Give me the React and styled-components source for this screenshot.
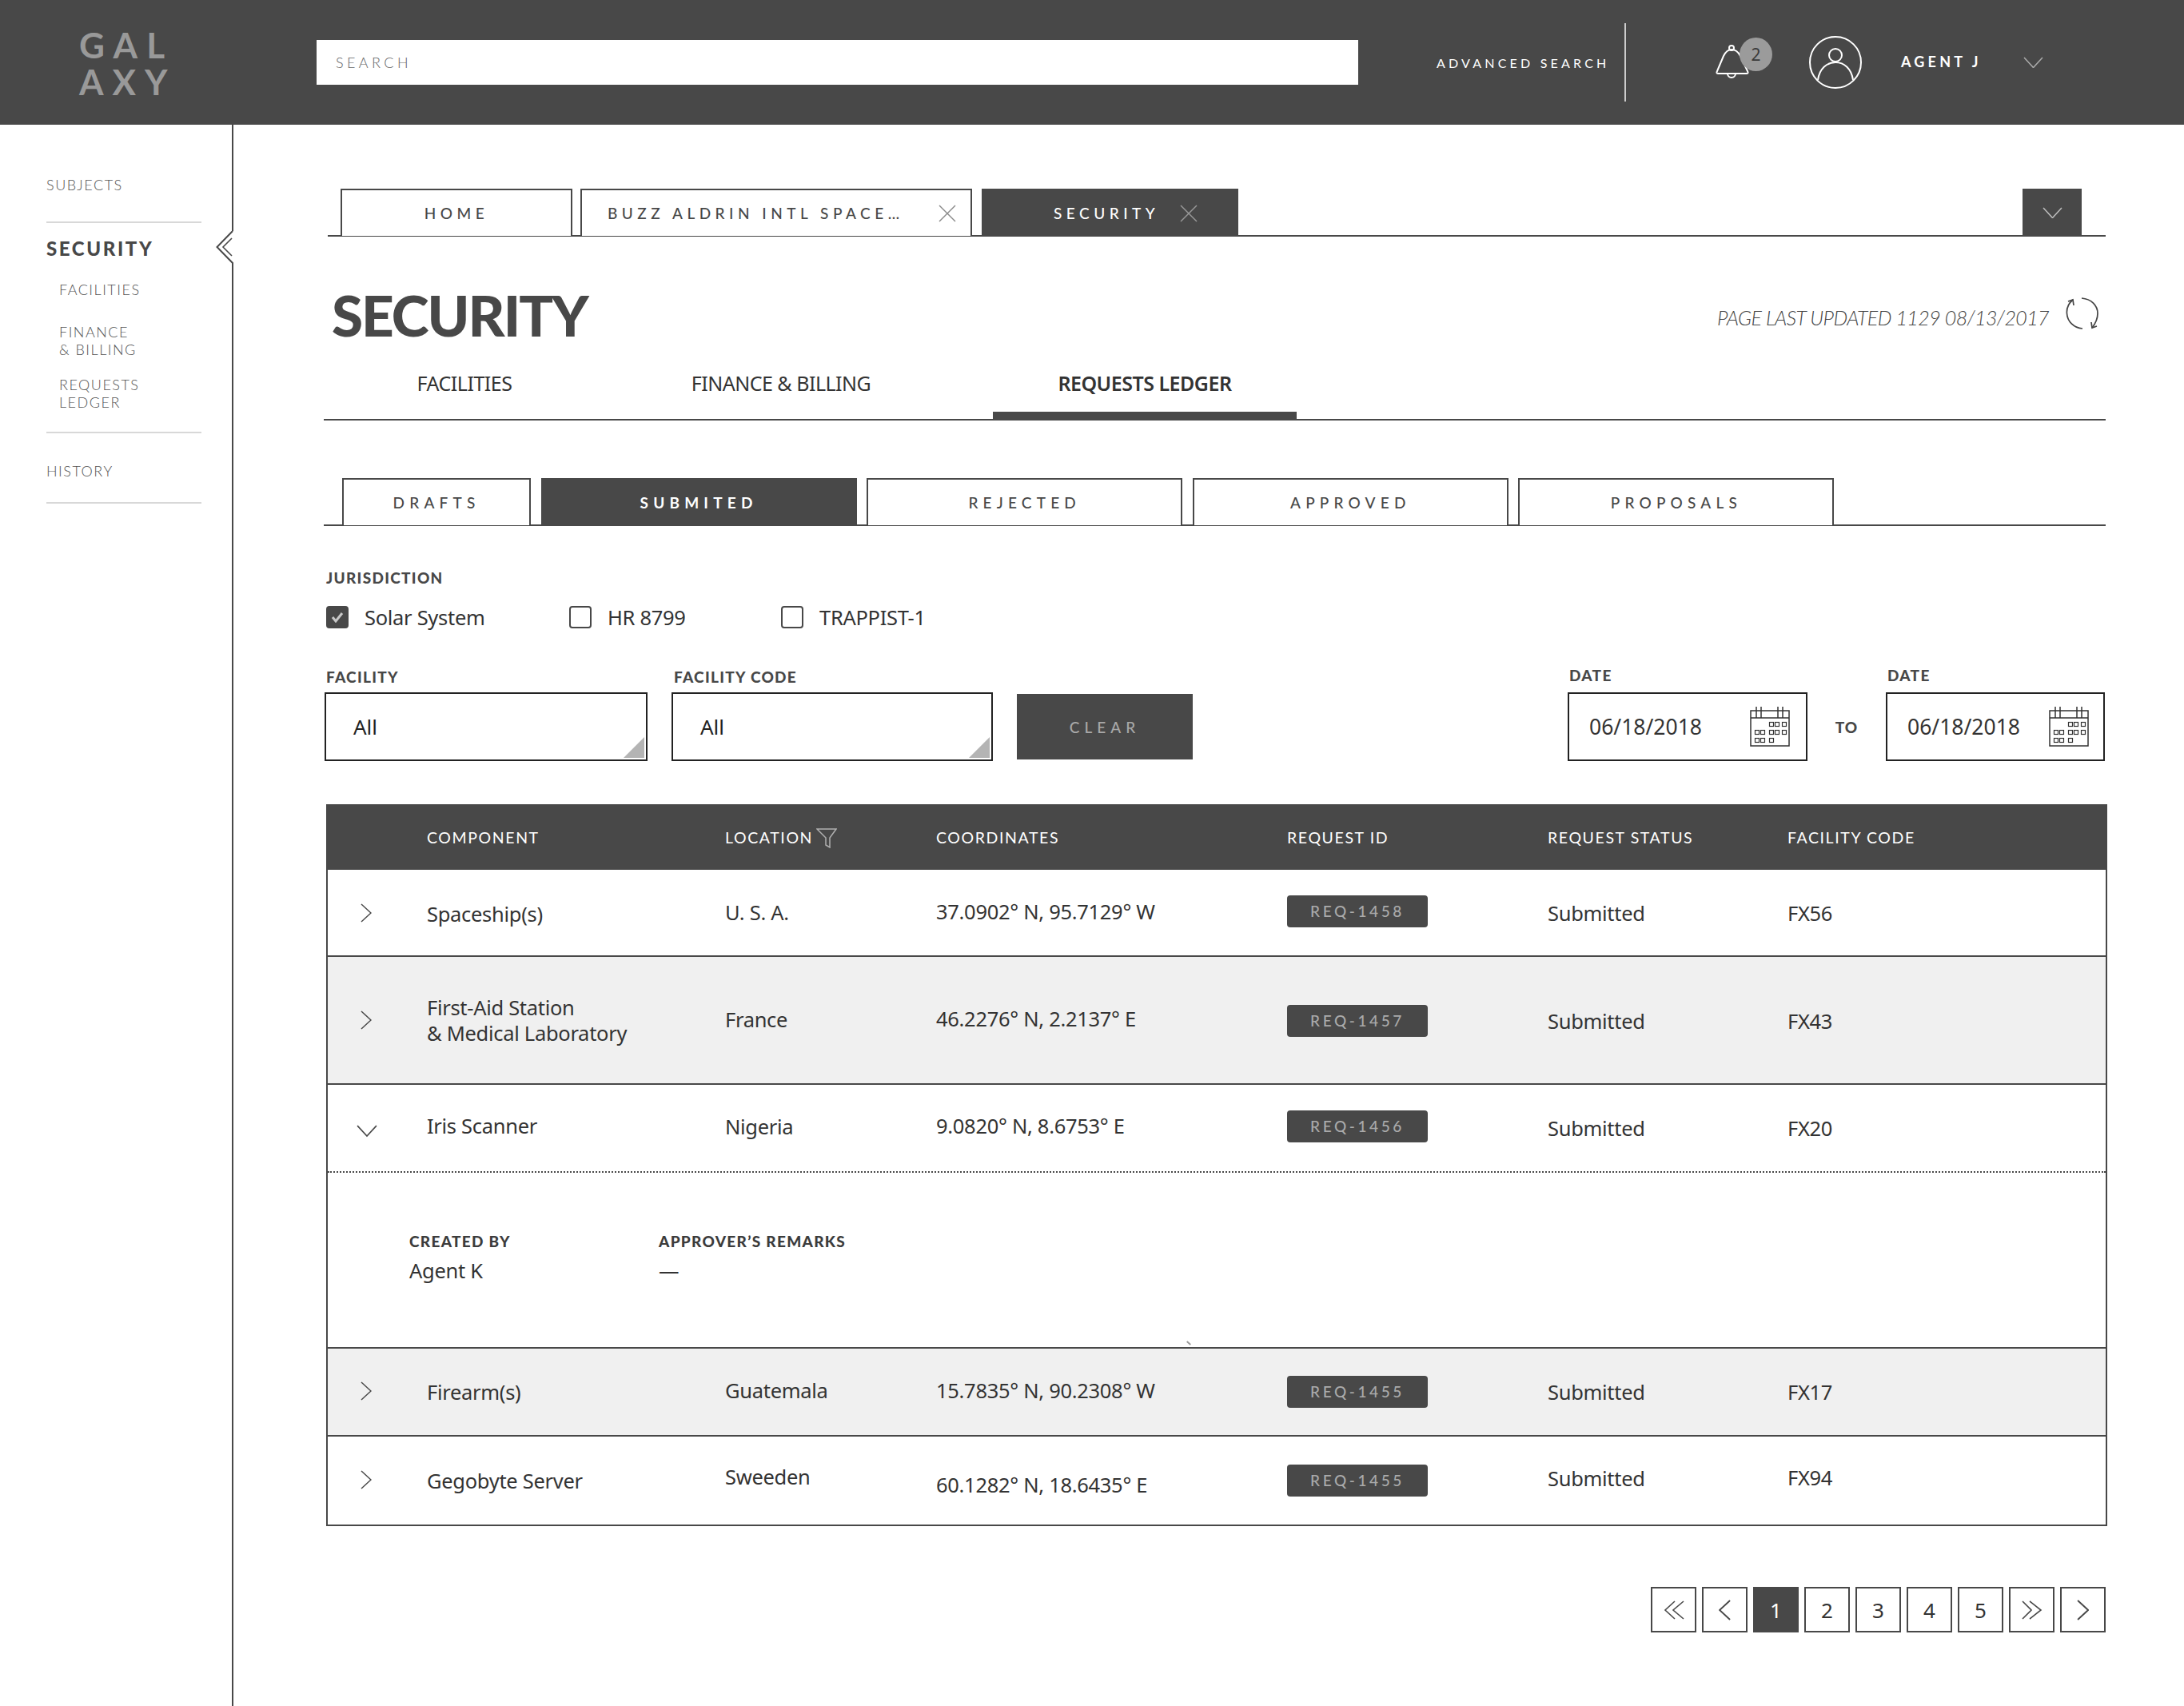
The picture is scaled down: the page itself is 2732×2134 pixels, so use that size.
import React from 'react';
import styled, { createGlobalStyle } from 'styled-components';

const DARK = '#484848';
const BODY_FONT = '"Noto Sans", "Open Sans", sans-serif';
const HEAD_FONT = 'Lato, "Liberation Sans", sans-serif';

const GlobalStyle = createGlobalStyle`
  html, body { margin: 0; padding: 0; height: 100%; background: #fff; }
  #root { height: 100%; }
  * { box-sizing: border-box; }
`;

const Page = styled.div`
  min-height: 2134px;
  display: flex;
  flex-direction: column;
  font-family: ${HEAD_FONT};
  color: ${DARK};
  overflow: hidden;
`;

/* ---------- header ---------- */
const TopBar = styled.header`
  height: 156px;
  background: ${DARK};
  display: flex;
  align-items: center;
  flex: none;
`;
const Logo = styled.div`
  width: 396px;
  padding-left: 99px;
  font-size: 44px;
  line-height: 46px;
  font-weight: 700;
  letter-spacing: 11px;
  color: #999;
  margin-top: 2px;
`;
const SearchBox = styled.div`
  width: 1303px;
  height: 56px;
  background: #fff;
  display: flex;
  align-items: center;
  padding-left: 24px;
  font-size: 18px;
  font-weight: 300;
  letter-spacing: 4.4px;
  color: #666;
`;
const AdvancedLink = styled.div`
  width: 333px;
  padding-left: 98px;
  font-size: 16px;
  letter-spacing: 4.2px;
  color: #fff;
  white-space: nowrap;
`;
const HeaderRule = styled.div`
  width: 2px;
  height: 98px;
  background: #ccc;
  margin-top: -1px;
`;
const BellWrap = styled.div`
  position: relative;
  width: 42px;
  height: 44px;
  margin-left: 112px;
`;
const BellBadge = styled.span`
  position: absolute;
  left: 30px;
  top: -9px;
  width: 41px;
  height: 42px;
  border-radius: 50%;
  background: #9b9b9b;
  color: #3a3a3a;
  font-family: ${BODY_FONT};
  font-size: 21px;
  display: flex;
  align-items: center;
  justify-content: center;
`;
const Avatar = styled.svg`
  width: 66px;
  height: 66px;
  margin-left: 75px;
`;
const AgentName = styled.div`
  margin-left: 49px;
  width: 153px;
  font-size: 18px;
  font-weight: 700;
  letter-spacing: 4.2px;
  color: #fff;
  white-space: nowrap;
  margin-top: -2px;
`;

/* ---------- shell ---------- */
const Shell = styled.div`
  flex: 1;
  display: flex;
`;
const Sidebar = styled.aside`
  position: relative;
  width: 292px;
  flex: none;
  border-right: 2px solid ${DARK};
  padding: 64px 0 0 58px;
`;
const Notch = styled.svg`
  position: absolute;
  right: -2px;
  top: 133px;
  width: 22px;
  height: 42px;
`;
const SideItem = styled.div`
  font-size: 18px;
  line-height: 22px;
  font-weight: 300;
  letter-spacing: 1.5px;
  color: #555;
  margin-top: ${p => p.$top || 0}px;
  padding-left: ${p => p.$indent || 0}px;
`;
const SideHead = styled.div`
  font-size: 24px;
  line-height: 30px;
  font-weight: 900;
  letter-spacing: 2.6px;
  margin-top: 17px;
`;
const SideRule = styled.div`
  width: 194px;
  height: 2px;
  background: #d8d8d8;
  margin-top: ${p => p.$top}px;
`;
const Main = styled.main`
  flex: 1;
  padding: 80px 96px 0 113px;
  min-width: 0;
`;

/* ---------- open pages strip ---------- */
const PageTabs = styled.div`
  height: 60px;
  margin-left: 5px;
  margin-right: 2px;
  padding: 0 30px 0 16px;
  display: flex;
  border-bottom: 2px solid ${DARK};
`;
const PageTab = styled.div`
  width: ${p => p.$width}px;
  margin-left: ${p => p.$gap || 0}px;
  height: 59px;
  border: 2px solid ${DARK};
  border-bottom: 0;
  background: ${p => (p.$active ? DARK : '#fff')};
  color: ${p => (p.$active ? '#fff' : DARK)};
  display: flex;
  align-items: center;
  justify-content: ${p => (p.$closable ? 'flex-start' : 'center')};
  padding-left: ${p => p.$pad || 0}px;
  font-size: 19px;
  font-weight: 500;
  letter-spacing: 5.5px;
  white-space: nowrap;
`;
const TabLabel = styled.span`
  width: ${p => p.$width}px;
  overflow: hidden;
  flex: none;
`;
const TabMenu = styled.div`
  width: 74px;
  height: 60px;
  margin-left: auto;
  background: ${DARK};
  display: flex;
  align-items: center;
  justify-content: center;
`;

/* ---------- title ---------- */
const TitleRow = styled.div`
  height: 144px;
  display: flex;
  justify-content: space-between;
  padding: 0 10px 0 10px;
`;
const Title = styled.h1`
  margin: 56px 0 0;
  font-size: 71px;
  line-height: 84px;
  font-weight: 900;
  letter-spacing: -2px;
`;
const Updated = styled.div`
  display: flex;
  align-items: flex-start;
  margin-top: 86px;
  font-size: 25px;
  line-height: 30px;
  font-weight: 300;
  font-style: italic;
  letter-spacing: -0.6px;
  color: #444;
`;
const RefreshIcon = styled.svg`
  width: 42px;
  height: 40px;
  margin: -10px 0 0 21px;
`;

/* ---------- section nav ---------- */
const SectionNav = styled.nav`
  height: 86px;
  margin-right: 2px;
  display: flex;
  border-bottom: 2px solid ${DARK};
`;
const SectionItem = styled.div`
  width: ${p => p.$width}px;
  margin-left: ${p => p.$gap || 0}px;
  height: 85px;
  padding-top: 22px;
  text-align: center;
  font-family: ${BODY_FONT};
  font-size: 25px;
  line-height: 34px;
  font-weight: ${p => (p.$active ? 600 : 400)};
  letter-spacing: -0.5px;
  color: #333;
  border-bottom: ${p => (p.$active ? `10px solid ${DARK}` : '0')};
`;

/* ---------- status tabs ---------- */
const StatusTabs = styled.div`
  margin-top: 72px;
  margin-right: 2px;
  height: 60px;
  padding-left: 23px;
  display: flex;
  gap: 12.6px;
  border-bottom: 2px solid ${DARK};
`;
const StatusTab = styled.div`
  width: ${p => p.$width}px;
  height: 59px;
  border: 2px solid ${DARK};
  border-bottom: 0;
  background: ${p => (p.$active ? DARK : '#fff')};
  color: ${p => (p.$active ? '#fff' : DARK)};
  display: flex;
  align-items: center;
  justify-content: center;
  font-size: 19px;
  font-weight: ${p => (p.$active ? 700 : 500)};
  letter-spacing: 6.2px;
`;

/* ---------- filters ---------- */
const Filters = styled.section`
  padding-left: 1px;
`;
const FieldLabel = styled.div`
  font-size: 19px;
  line-height: 22px;
  font-weight: 900;
  letter-spacing: 1.3px;
  padding-left: ${p => p.$indent || 2}px;
`;
const JurisdictionLabel = styled(FieldLabel)`
  margin-top: 54px;
`;
const CheckRow = styled.div`
  display: flex;
  margin-top: 20px;
  padding-left: 2px;
  height: 36px;
  align-items: center;
`;
const CheckItem = styled.label`
  width: ${p => p.$width}px;
  display: flex;
  align-items: center;
  gap: 20px;
  font-family: ${BODY_FONT};
  font-size: 25.5px;
  letter-spacing: -0.3px;
  color: #333;
`;
const CheckBox = styled.span`
  width: 28px;
  height: 28px;
  flex: none;
  border-radius: 4px;
  border: 2px solid ${DARK};
  background: ${p => (p.$checked ? DARK : '#fff')};
  display: flex;
  align-items: center;
  justify-content: center;
`;
const FilterRow = styled.div`
  display: flex;
  align-items: flex-end;
  margin-top: 44px;
  padding-right: 3px;
`;
const Field = styled.div`
  width: ${p => p.$width}px;
  margin-left: ${p => p.$gap || 0}px;
`;
const SelectBox = styled.div`
  position: relative;
  height: 86px;
  margin-top: 8px;
  border: 2px solid #222;
  display: flex;
  align-items: center;
  padding-left: 34px;
  font-family: ${BODY_FONT};
  font-size: 26px;
  color: #222;
`;
const SelectCorner = styled.span`
  position: absolute;
  right: 2px;
  bottom: 2px;
  width: 0;
  height: 0;
  border-style: solid;
  border-width: 0 0 26px 26px;
  border-color: transparent transparent #b4b4b4 transparent;
`;
const ClearButton = styled.div`
  width: 220px;
  height: 82px;
  margin: 0 0 2px 30px;
  background: ${DARK};
  color: #a8a8a8;
  display: flex;
  align-items: center;
  justify-content: center;
  font-size: 19px;
  font-weight: 500;
  letter-spacing: 6px;
`;
const DateGroup = styled.div`
  margin-left: auto;
  display: flex;
  align-items: flex-end;
`;
const DateBox = styled.div`
  height: 86px;
  margin-top: 10px;
  border: 2px solid #222;
  display: flex;
  align-items: center;
  justify-content: space-between;
  padding: 0 ${p => p.$pad}px 0 25px;
  font-family: ${BODY_FONT};
  font-size: 26.5px;
  color: #333;
`;
const ToLabel = styled.div`
  width: 98px;
  height: 86px;
  display: flex;
  align-items: center;
  justify-content: center;
  font-size: 19px;
  font-weight: 900;
  letter-spacing: 1px;
`;

/* ---------- table ---------- */
const Table = styled.section`
  margin: 54px 0 0 3px;
  border: 2px solid ${DARK};
  border-top: 0;
`;
const COLUMNS = '124px 373px 264px 439px 326px 300px 1fr';
const HeadRow = styled.div`
  display: grid;
  grid-template-columns: ${COLUMNS};
  align-items: center;
  height: 82px;
  margin: 0 -2px;
  padding: 0 2px;
  background: ${DARK};
  color: #fff;
  font-size: 19.5px;
  font-weight: 400;
  letter-spacing: 1.6px;
`;
const HeadCell = styled.div`
  display: flex;
  align-items: center;
  gap: 4px;
`;
const FilterIcon = styled.svg`
  width: 26px;
  height: 25px;
  margin-top: 2px;
`;
const Row = styled.div`
  display: grid;
  grid-template-columns: ${COLUMNS};
  align-items: center;
  height: ${p => p.$height}px;
  background: ${p => (p.$shaded ? '#f0f0f0' : '#fff')};
  border-bottom: ${p => (p.$last ? '0' : p.$open ? `2px dotted ${DARK}` : `2px solid ${DARK}`)};
  font-family: ${BODY_FONT};
  font-size: 25.5px;
  line-height: 32px;
  letter-spacing: -0.3px;
  color: #333;
`;
const Cell = styled.div`
  margin-top: ${p => (p.$shift || 0) * 2}px;
`;
const RowChevron = styled.div`
  padding-left: ${p => p.$open ? 36 : 41}px;
  display: flex;
  margin-top: ${p => (p.$shift || 0) * 2}px;
`;
const ReqBadge = styled.span`
  display: flex;
  align-items: center;
  justify-content: center;
  width: 176px;
  height: 40px;
  border-radius: 4px;
  background: ${DARK};
  color: #aaa;
  font-family: ${HEAD_FONT};
  font-size: 19px;
  font-weight: 500;
  letter-spacing: 3.6px;
  margin-top: ${p => (p.$shift || 0) * 2}px;
`;
const Details = styled.div`
  position: relative;
  height: 220px;
  border-bottom: 2px solid ${DARK};
  padding: 75px 0 0 102px;
  display: flex;
`;
const DetailCol = styled.div`
  width: 312px;
`;
const DetailLabel = styled.div`
  font-size: 19px;
  line-height: 22px;
  font-weight: 900;
  letter-spacing: 1.3px;
  color: #3c3c3c;
`;
const DetailValue = styled.div`
  margin-top: 9px;
  font-family: ${BODY_FONT};
  font-size: 25.5px;
  line-height: 32px;
  letter-spacing: -0.3px;
  color: #333;
`;
const StrayTick = styled.span`
  position: absolute;
  left: 1074px;
  bottom: 4px;
  width: 6px;
  height: 2px;
  background: #999;
  transform: rotate(40deg);
`;

/* ---------- pagination ---------- */
const Pager = styled.div`
  display: flex;
  justify-content: flex-end;
  gap: 7px;
  margin-top: 76px;
  padding-right: 2px;
`;
const PageButton = styled.div`
  width: 57px;
  height: 57px;
  border: 2px solid ${DARK};
  background: ${p => (p.$active ? DARK : '#fff')};
  color: ${p => (p.$active ? '#fff' : '#333')};
  display: flex;
  align-items: center;
  justify-content: center;
  font-family: ${BODY_FONT};
  font-size: 26px;
`;

const Chevron = ({ dir = 'down', size = 24, color = DARK, width = 1.5 }) => {
  const pts = {
    down: '1,1 12,13 23,1',
    right: '1,1 13,12 1,23',
    left: '13,1 1,12 13,23',
  }[dir];
  const box = dir === 'down' ? '0 0 24 14' : '0 0 14 24';
  const ratio = 14 / 24;
  return (
    <svg
      viewBox={box}
      width={dir === 'down' ? size : size * ratio}
      height={dir === 'down' ? size * ratio : size}
      fill="none"
      stroke={color}
      strokeWidth={width}
    >
      <polyline points={pts} />
    </svg>
  );
};

const DoubleChevron = ({ flip }) => (
  <svg viewBox="0 0 26 24" width="26" height="24" fill="none" stroke={DARK} strokeWidth="1.6">
    {flip ? (
      <>
        <polyline points="1,1 12,12 1,23" />
        <polyline points="10,1 24,12 10,23" />
      </>
    ) : (
      <>
        <polyline points="14,1 2,12 14,23" />
        <polyline points="25,1 12,12 25,23" />
      </>
    )}
  </svg>
);

const CloseIcon = ({ color }) => (
  <svg viewBox="0 0 22 22" width="22" height="22" stroke={color} strokeWidth="1.5" style={{ flex: 'none', marginLeft: 18 }}>
    <line x1="1" y1="1" x2="21" y2="21" />
    <line x1="21" y1="1" x2="1" y2="21" />
  </svg>
);

const CalendarIcon = () => {
  const squares = [
    [27, 22], [34, 22], [43, 22],
    [9, 32], [16, 32], [27, 32], [34, 32], [43, 32],
    [9, 42], [16, 42], [27, 42],
  ];
  return (
    <svg viewBox="0 0 50 50" width="50" height="50" fill="none" stroke="#333" strokeWidth="1.5">
      <rect x="1" y="5" width="48" height="44" />
      <line x1="1" y1="14" x2="49" y2="14" />
      {[8, 14, 35, 41].map(x => (
        <line key={x} x1={x} y1="0" x2={x} y2="14" />
      ))}
      {squares.map(([x, y]) => (
        <rect key={`${x}-${y}`} x={x - 2.5} y={y - 2.5} width="5" height="5" strokeWidth="1.2" />
      ))}
    </svg>
  );
};

const rows = [
  { name: ['Spaceship(s)'], place: 'U. S. A.', coords: '37.0902° N, 95.7129° W', req: 'REQ-1458', code: 'FX56', height: 109, shifts: [1, -1, -2, -2, 0, 0] },
  { name: ['First-Aid Station', '& Medical Laboratory'], place: 'France', coords: '46.2276° N, 2.2137° E', req: 'REQ-1457', code: 'FX43', height: 160, shaded: true, shifts: [0, -1, -2, 1, 1, 1] },
  { name: ['Iris Scanner'], place: 'Nigeria', coords: '9.0820° N, 8.6753° E', req: 'REQ-1456', code: 'FX20', height: 110, open: true, shifts: [-3, -2, -3, -2, 0, 0], chevron: 4 },
  { name: ['Firearm(s)'], place: 'Guatemala', coords: '15.7835° N, 90.2308° W', req: 'REQ-1455', code: 'FX17', height: 110, shaded: true, shifts: [0, -2, -2, 0, 0, 0], chevron: -1 },
  { name: ['Gegobyte Server'], place: 'Sweeden', coords: '60.1282° N, 18.6435° E', req: 'REQ-1455', code: 'FX94', height: 110, last: true, shifts: [0, -5, 5, 0, -3, -4], chevron: -1 },
];

const TableRow = ({ row }) => (
  <Row $height={row.height} $shaded={row.shaded} $open={row.open} $last={row.last}>
    <RowChevron $open={row.open} $shift={row.chevron}>
      {row.open ? <Chevron dir="down" size={26} /> : <Chevron dir="right" size={24} />}
    </RowChevron>
    <Cell $shift={row.shifts[0]}>
      {row.name.map(line => (
        <div key={line}>{line}</div>
      ))}
    </Cell>
    <Cell $shift={row.shifts[1]}>{row.place}</Cell>
    <Cell $shift={row.shifts[2]}>{row.coords}</Cell>
    <div>
      <ReqBadge $shift={row.shifts[3]}>{row.req}</ReqBadge>
    </div>
    <Cell $shift={row.shifts[4]}>Submitted</Cell>
    <Cell $shift={row.shifts[5]}>{row.code}</Cell>
  </Row>
);

function App() {
  return (
    <Page>
      <GlobalStyle />
      <TopBar>
        <Logo>GAL<br />AXY</Logo>
        <SearchBox>SEARCH</SearchBox>
        <AdvancedLink>ADVANCED SEARCH</AdvancedLink>
        <HeaderRule />
        <BellWrap>
          <svg viewBox="0 0 42 44" width="42" height="44" fill="none" stroke="#fff" strokeWidth="2">
            <circle cx="20" cy="4" r="3" />
            <path d="M2 33 Q0.5 36 3 36 H39 Q41.5 36 40 33 L31 14 Q27 6 20 6 Q14 6 10 14 Z" />
            <path d="M15 36 a5 5 0 0 0 10 0" />
          </svg>
          <BellBadge>2</BellBadge>
        </BellWrap>
        <Avatar viewBox="0 0 66 66" fill="none" stroke="#fff" strokeWidth="2">
          <circle cx="33" cy="33" r="32" />
          <circle cx="33" cy="24" r="8" />
          <path d="M11 55 C13 41 22 33 33 33 C44 33 53 41 55 55" />
        </Avatar>
        <AgentName>AGENT J</AgentName>
        <Chevron dir="down" size={25} color="#aaa" />
      </TopBar>
      <Shell>
        <Sidebar>
          <Notch viewBox="0 0 22 42" fill="none" stroke={DARK} strokeWidth="1.6">
            <polygon points="21,0 1.5,20 21,40 22,42 22,0" fill="#fff" stroke="none" />
            <polyline points="21,0 1.5,20 21,40 21,42" strokeWidth="2" />
            <polyline points="20,9 9,20 20,31" />
          </Notch>
          <SideItem>SUBJECTS</SideItem>
          <SideRule $top={35} />
          <SideHead>SECURITY</SideHead>
          <SideItem $indent={16} $top={25}>FACILITIES</SideItem>
          <SideItem $indent={16} $top={31}>FINANCE<br />&amp; BILLING</SideItem>
          <SideItem $indent={16} $top={22}>REQUESTS<br />LEDGER</SideItem>
          <SideRule $top={26} />
          <SideItem $top={36}>HISTORY</SideItem>
          <SideRule $top={28} />
        </Sidebar>
        <Main>
          <PageTabs>
            <PageTab $width={290}>HOME</PageTab>
            <PageTab $width={490} $gap={10} $closable $pad={32}>
              <TabLabel $width={396}>BUZZ ALDRIN INTL SPACE…</TabLabel>
              <CloseIcon color="#8a8a8a" />
            </PageTab>
            <PageTab $width={321} $gap={12} $active $closable $pad={88}>
              <TabLabel $width={140}>SECURITY</TabLabel>
              <CloseIcon color="#999" />
            </PageTab>
            <TabMenu>
              <Chevron dir="down" size={25} color="#bbb" />
            </TabMenu>
          </PageTabs>
          <TitleRow>
            <Title>SECURITY</Title>
            <Updated>
              PAGE LAST UPDATED 1129 08/13/2017
              <RefreshIcon viewBox="0 0 42 40" fill="none" stroke="#444" strokeWidth="1.7">
                <path d="M9 3 C3 8 1 14 1.5 20 C2 30 10 38 21 39" />
                <path d="M3 5 L9 3 L10 10" />
                <path d="M20 1 C32 2 40 10 40 20 C40 27 37 33 33 38" />
                <path d="M32 31 L33 38 L39 36" />
              </RefreshIcon>
            </Updated>
          </TitleRow>
          <SectionNav>
            <SectionItem $width={352}>FACILITIES</SectionItem>
            <SectionItem $width={440}>FINANCE &amp; BILLING</SectionItem>
            <SectionItem $width={380} $gap={45} $active>REQUESTS LEDGER</SectionItem>
          </SectionNav>
          <StatusTabs>
            <StatusTab $width={236}>DRAFTS</StatusTab>
            <StatusTab $width={395} $active>SUBMITED</StatusTab>
            <StatusTab $width={395}>REJECTED</StatusTab>
            <StatusTab $width={395}>APPROVED</StatusTab>
            <StatusTab $width={395}>PROPOSALS</StatusTab>
          </StatusTabs>
          <Filters>
            <JurisdictionLabel>JURISDICTION</JurisdictionLabel>
            <CheckRow>
              <CheckItem $width={304}>
                <CheckBox $checked>
                  <svg viewBox="0 0 16 14" width="16" height="14" fill="none" stroke="#c8c8c8" strokeWidth="3">
                    <polyline points="2,7 6,12 14,2" />
                  </svg>
                </CheckBox>
                Solar System
              </CheckItem>
              <CheckItem $width={265}>
                <CheckBox />
                HR 8799
              </CheckItem>
              <CheckItem $width={260}>
                <CheckBox />
                TRAPPIST-1
              </CheckItem>
            </CheckRow>
            <FilterRow>
              <Field $width={404}>
                <FieldLabel>FACILITY</FieldLabel>
                <SelectBox>All<SelectCorner /></SelectBox>
              </Field>
              <Field $width={402} $gap={30}>
                <FieldLabel $indent={3}>FACILITY CODE</FieldLabel>
                <SelectBox>All<SelectCorner /></SelectBox>
              </Field>
              <ClearButton>CLEAR</ClearButton>
              <DateGroup>
                <Field $width={300}>
                  <FieldLabel>DATE</FieldLabel>
                  <DateBox $pad={20}>06/18/2018<CalendarIcon /></DateBox>
                </Field>
                <ToLabel>TO</ToLabel>
                <Field $width={274}>
                  <FieldLabel>DATE</FieldLabel>
                  <DateBox $pad={18}>06/18/2018<CalendarIcon /></DateBox>
                </Field>
              </DateGroup>
            </FilterRow>
          </Filters>
          <Table>
            <HeadRow>
              <span />
              <HeadCell>COMPONENT</HeadCell>
              <HeadCell>
                LOCATION
                <FilterIcon viewBox="0 0 26 25" fill="none" stroke="#b0b0b0" strokeWidth="1.5">
                  <path d="M1 1 H25 L17 12 V24 L12 21 V12 Z" />
                </FilterIcon>
              </HeadCell>
              <HeadCell>COORDINATES</HeadCell>
              <HeadCell>REQUEST ID</HeadCell>
              <HeadCell>REQUEST STATUS</HeadCell>
              <HeadCell>FACILITY CODE</HeadCell>
            </HeadRow>
            {rows.slice(0, 3).map(row => (
              <TableRow key={row.name[0]} row={row} />
            ))}
            <Details>
              <DetailCol>
                <DetailLabel>CREATED BY</DetailLabel>
                <DetailValue>Agent K</DetailValue>
              </DetailCol>
              <DetailCol>
                <DetailLabel>APPROVER’S REMARKS</DetailLabel>
                <DetailValue>—</DetailValue>
              </DetailCol>
              <StrayTick />
            </Details>
            {rows.slice(3).map(row => (
              <TableRow key={row.name[0]} row={row} />
            ))}
          </Table>
          <Pager>
            <PageButton><DoubleChevron /></PageButton>
            <PageButton><Chevron dir="left" size={26} width={1.8} /></PageButton>
            <PageButton $active>1</PageButton>
            <PageButton>2</PageButton>
            <PageButton>3</PageButton>
            <PageButton>4</PageButton>
            <PageButton>5</PageButton>
            <PageButton><DoubleChevron flip /></PageButton>
            <PageButton><Chevron dir="right" size={26} width={1.8} /></PageButton>
          </Pager>
        </Main>
      </Shell>
    </Page>
  );
}

export default App;
